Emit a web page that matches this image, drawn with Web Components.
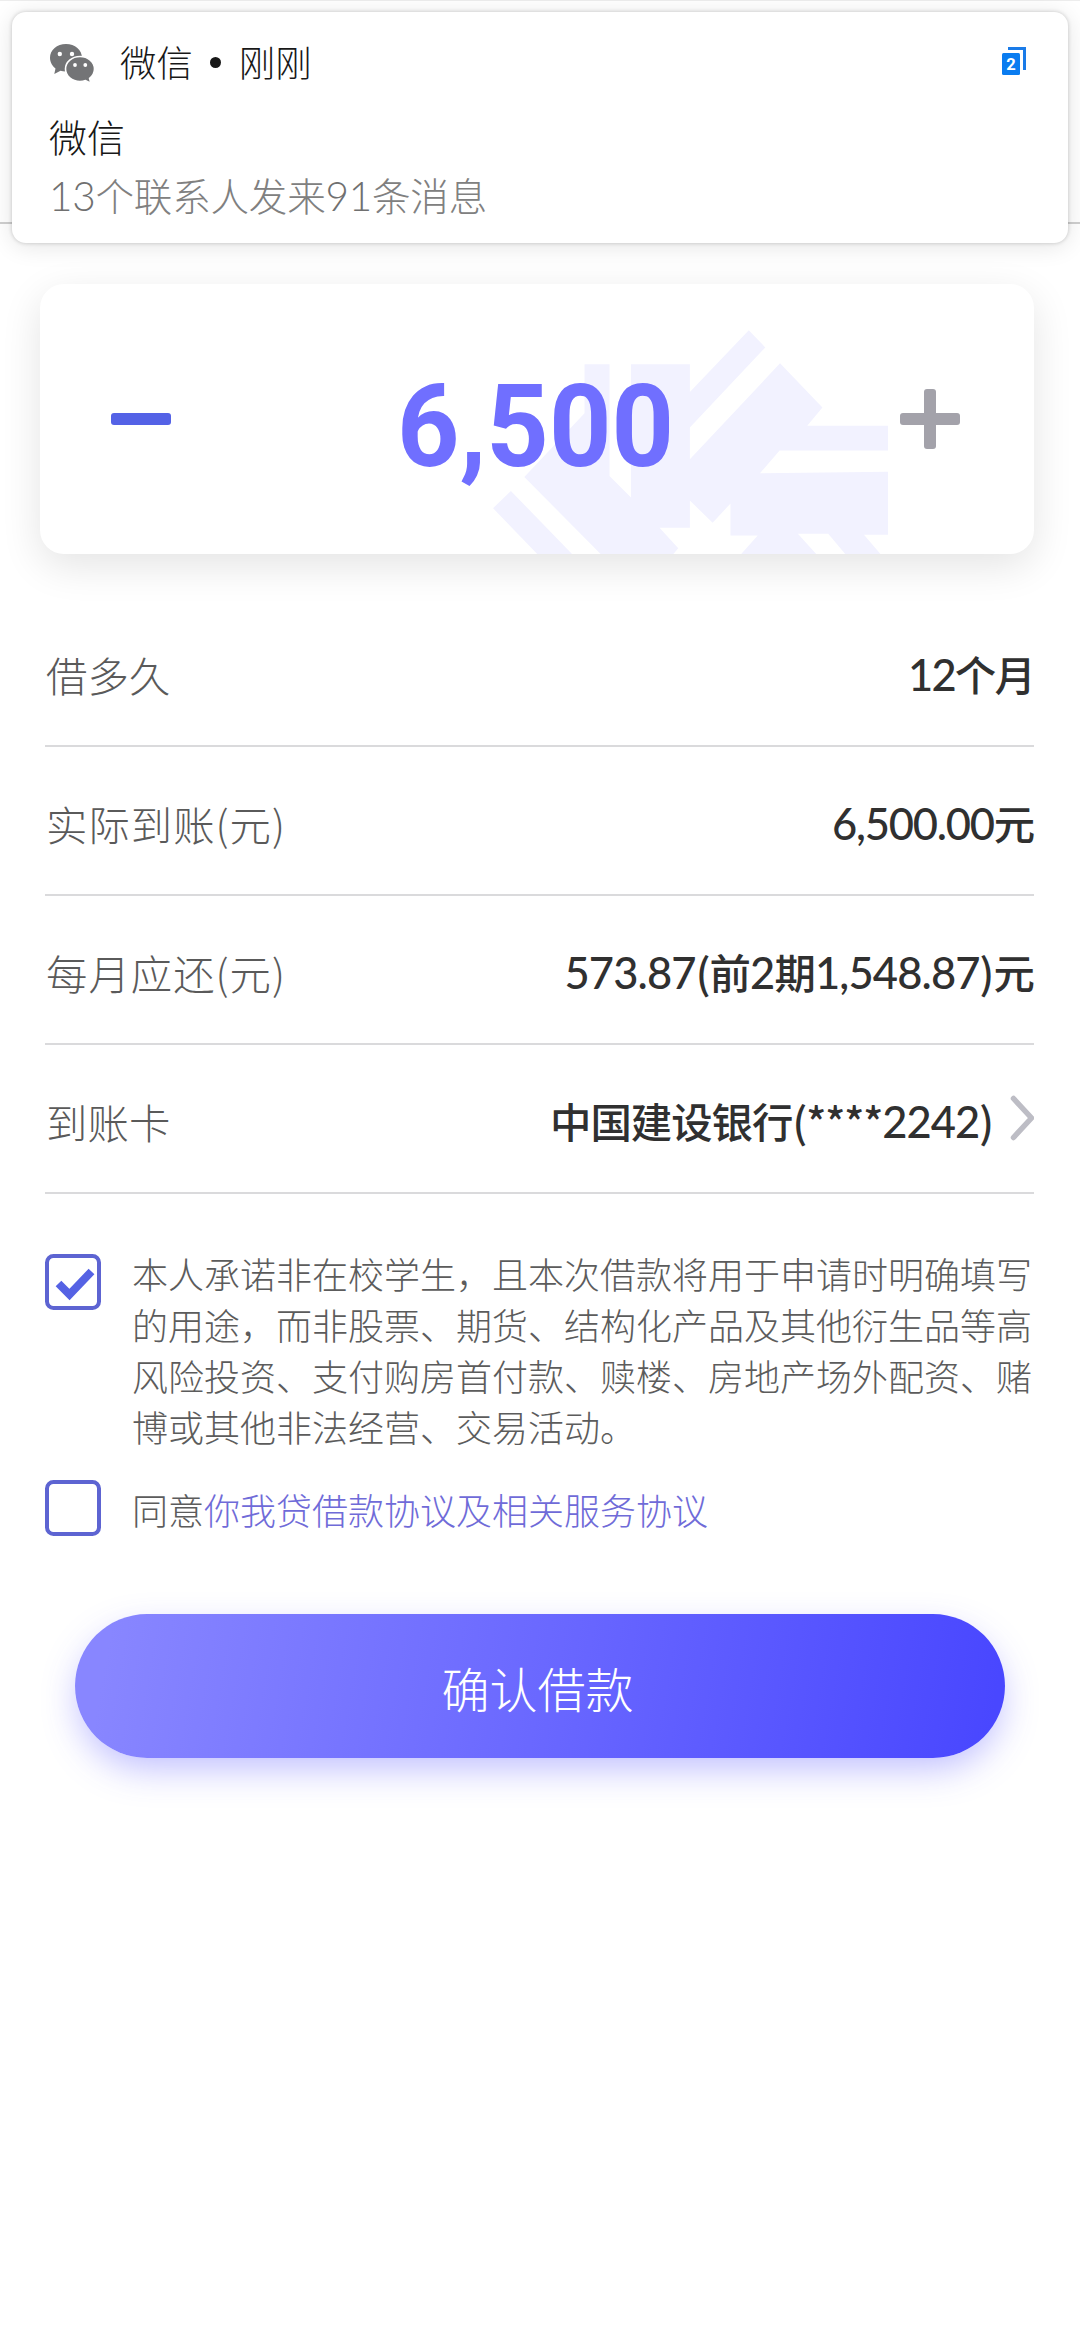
<!DOCTYPE html>
<html lang="zh-CN">
<head>
<meta charset="utf-8">
<title>确认借款</title>
<style>
html,body{margin:0;padding:0;background:#fff}
body{width:1080px;height:2340px;overflow:hidden;font-family:"Noto Sans CJK SC",sans-serif;font-weight:300}
</style>
</head>
<body>
<loan-page>
  <push-notice slot="notice" app="微信" time="刚刚" heading="微信" message="13个联系人发来91条消息"></push-notice>
  <amount-card>6,500</amount-card>
  <section>
    <info-row label="借多久" label-width="124.5" value-width="126">12个月</info-row>
    <info-row label="实际到账(元)" label-width="240" value-width="202">6,500.00元</info-row>
    <info-row label="每月应还(元)" label-width="240" value-width="469.5">573.87(前2期1,548.87)元</info-row>
    <info-row label="到账卡" label-width="124.5" value-width="443" arrow>中国建设银行(****2242)</info-row>
  </section>
  <check-line checked>本人承诺非在校学生，且本次借款将用于申请时明确填写的用途，而非股票、期货、结构化产品及其他衍生品等高风险投资、支付购房首付款、赎楼、房地产场外配资、赌博或其他非法经营、交易活动。</check-line>
  <check-line class="agree">同意<a>你我贷借款协议及相关服务协议</a></check-line>
  <primary-button>确认借款</primary-button>
</loan-page>
<script>
const define = (name, html, setup) => customElements.define(name, class extends HTMLElement {
  constructor() {
    super();
    const t = document.createElement('template');
    t.innerHTML = html;
    this.attachShadow({mode: 'open'}).append(t.content.cloneNode(true));
  }
  connectedCallback() { if (setup) setup(this, this.shadowRoot); }
});

/* Spreads the letter spacing so that one line of text fills the given width. */
define('fit-text', `<style>
:host{display:block;white-space:nowrap}
span{display:inline-block}
</style><span><slot></slot></span>`, (el, root) => {
  const span = root.querySelector('span');
  const n = el.textContent.length;
  span.style.letterSpacing = '0px';
  const natural = span.getBoundingClientRect().width;
  const step = (parseFloat(el.getAttribute('width')) - natural) / n;
  span.style.letterSpacing = step + 'px';
});

/* Builds a fit-text whose figures sit in <b>, so that they can take their own face. */
const fitText = (text, width) => {
  const f = document.createElement('fit-text');
  f.setAttribute('width', width);
  f.innerHTML = text.replace(/[\d.,]+/g, '<b>$&</b>');
  return f;
};

define('push-notice', `<style>
:host{display:block;box-sizing:border-box;width:1056px;height:231px;border-radius:14px;background:#fff;
 padding:28px 41px 0 37px;box-shadow:0 0 4px rgba(0,0,0,.2),0 3px 24px rgba(0,0,0,.11);color:#181818}
.top{display:flex;align-items:center;height:46px;font-size:36.4px;line-height:46px}
.wx{width:46px;height:42px;margin-right:25px}
.app,.time{margin-top:-4px}
.dot{width:46px;display:flex;justify-content:center}
.dot i{width:11px;height:11px;border-radius:50%;background:#181818;margin-top:-2px}
.badge{margin-left:auto;width:26px;height:30px;margin-top:-4px}
.title{font-size:38px;line-height:48px;margin-top:26px}
.msg{font-size:38.6px;line-height:50px;margin-top:9px;color:#808080}
.msg b{font:300 40.5px/1 Lato,sans-serif;color:#707070}
</style>
<div class="top">
<svg class="wx" viewBox="0 0 46 42"><g fill="#737476"><path d="M17 2C8 2 1 8 1 15.800C1 20.500 3.500 24 6.500 26.500L5.300 32L11.500 28.800Q14.500 29.700 17.500 29.500C25 29 33 24 33 15.800C33 8 26 2 17 2Z"/><path d="M31 14.500C23 14.500 16.500 20 16.500 27C16.500 34 23 39.500 31 39.500Q34 39.500 36.500 38.600L41.800 41.200L40.600 36.400C43.500 34 45.500 31 45.500 27C45.500 20 39 14.500 31 14.500Z" stroke="#fff" stroke-width="1.600"/></g><g fill="#fff"><circle cx="10.800" cy="12" r="2.200"/><circle cx="23" cy="12" r="2.200"/><circle cx="26" cy="23" r="1.900"/><circle cx="36.300" cy="23" r="1.900"/></g></svg>
<span class="app"></span><span class="dot"><i></i></span><span class="time"></span>
<svg class="badge" viewBox="0 0 26 30"><rect x="1" y="7" width="18" height="22" rx="1.500" fill="#0a7cf0"/><path d="M7 2.600H23.500V24" fill="none" stroke="#1a7be8" stroke-width="3"/><text x="10" y="24" text-anchor="middle" font-family="Roboto" font-weight="700" font-size="16.500" fill="#fff">2</text></svg>
</div>
<div class="title"></div>
<div class="msg"></div>`, (el, root) => {
  root.querySelector('.app').textContent = el.getAttribute('app');
  root.querySelector('.time').textContent = el.getAttribute('time');
  root.querySelector('.title').textContent = el.getAttribute('heading');
  root.querySelector('.msg').append(fitText(el.getAttribute('message'), 438));
});

define('amount-card', `<style>
:host{display:flex;position:relative;box-sizing:border-box;width:994px;height:270px;margin:60px 0 0 40px;border-radius:24px;
 background:#fff;box-shadow:0 12px 40px rgba(0,0,0,.11);align-items:center;justify-content:space-between;padding:0 74px 0 71px}
.mark{position:absolute;left:0;top:0;width:100%;height:100%;border-radius:24px}
.icon{width:60px;height:60px;position:relative}
.num{position:relative;width:295px;height:180px;display:block;overflow:visible}
</style>
<svg class="mark" viewBox="-762 70 2227 813" preserveAspectRatio="none" fill="#f2f2ff">
<path d="M458 312H514V648L562 713V312H694V395L826 209L863 261L694 502V598L896 309L991 442L957 497H1138V571H895L851 640L1138 635V825H1084L1121 883H1042L1004 822H936L977 883H809L846 827H785V731L745 789L694 722V804H626L668 866L657 883H494L323 651L458 459Z"/>
<path d="M293 693L430 883H352L253 745Z"/></svg>
<svg class="icon" viewBox="0 0 60 60"><rect y="24" width="60" height="12" rx="3" fill="#5462e6"/></svg>
<svg class="num" viewBox="0 0 295 180"><text x="9" y="137" textLength="277" lengthAdjust="spacingAndGlyphs" font-family="Roboto" font-weight="700" font-size="115" fill="#706fff"></text></svg>
<svg class="icon" viewBox="0 0 60 60" fill="#a3a2aa"><rect y="24" width="60" height="12" rx="3"/><rect x="24" width="12" height="60" rx="3"/></svg>`, (el, root) => {
  root.querySelector('text').textContent = el.textContent;
});

define('info-row', `<style>
:host{display:flex;box-sizing:border-box;height:149px;border-bottom:2px solid #dadadc;align-items:center;justify-content:space-between;
 font-size:41.400px;line-height:60px;color:#5a5a5a;padding:4px 0 0 1px}
.v{display:flex;align-items:center;color:#303030;font-weight:500;margin-top:-2px}
b{font:500 43.500px/1 Lato,sans-serif}
svg{width:24px;height:46px;margin-left:17px;margin-top:-3px}
</style>
<div class="l"></div><div class="v"></div>`, (el, root) => {
  root.querySelector('.l').append(fitText(el.getAttribute('label'), el.getAttribute('label-width')));
  const v = root.querySelector('.v');
  v.append(fitText(el.textContent, el.getAttribute('value-width')));
  if (el.hasAttribute('arrow'))
    v.insertAdjacentHTML('beforeend', '<svg viewBox="0 0 24 46"><path d="M3.500 3.500L21.500 23L3.500 42.500" fill="none" stroke="#bdbdc5" stroke-width="5.500" stroke-linecap="round"/></svg>');
});

define('check-line', `<style>
:host{display:flex;font-size:36px;line-height:51px;color:#5c5c5c}
svg{flex:none;width:56px;height:56px;margin:6px 31px 0 0}
path{display:none}
:host([checked]) path{display:block}
p{margin:0;width:902px;line-break:anywhere;word-break:break-all}
:host(.agree) p{padding-top:10px}
::slotted(a){color:#6f6bd8}
</style>
<svg viewBox="0 0 56 56"><rect x="2" y="2" width="52" height="52" rx="6.500" fill="none" stroke="#5d64d2" stroke-width="4"/><path d="M13.500 29.500L24.500 40.500L46.500 17.500" fill="none" stroke="#5562e4" stroke-width="8"/></svg>
<p><slot></slot></p>`);

define('primary-button', `<style>
:host{display:flex;box-sizing:border-box;width:930px;height:144px;margin:78px 0 0 75px;border-radius:72px;align-items:center;justify-content:center;
 background:linear-gradient(100deg,#8886ff 4%,#6a68ff 50%,#4947ff 98%);box-shadow:0 14px 36px -4px rgba(74,72,255,.36);
 color:#fff;font-size:48px;line-height:70px;padding:2px 5px 0 0}
</style><slot></slot>`);

define('loan-page', `<style>
:host{display:block;position:relative;width:1080px;height:2340px;background:#fff;overflow:hidden}
header{box-sizing:border-box;height:224px;border-bottom:2px solid #cfcfcf;border-top:1px solid #ededed}
main{display:flex;flex-direction:column}
::slotted(section){margin:44px 46px 0 45px}
::slotted(check-line){margin:54px 0 0 45px}
::slotted(check-line.agree){margin-top:22px}
::slotted(push-notice){position:absolute;left:12px;top:12px}
</style>
<header></header><main><slot></slot></main><slot name="notice"></slot>`);
</script>
</body>
</html>
